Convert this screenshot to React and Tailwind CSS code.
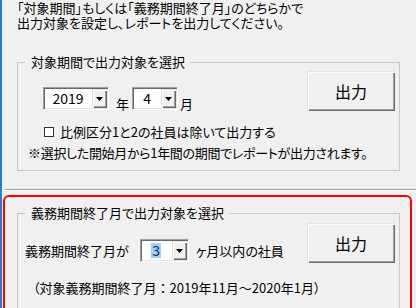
import React from "react";

function Triangle() {
  return (
    <svg width="7" height="4" viewBox="0 0 7 4">
      <path d="M0 0H7L3.5 4Z" fill="#000" />
    </svg>
  );
}

function Combo({ className, value, selected }) {
  return (
    <div
      className={`flex h-[23px] shrink-0 border border-t-[#a0a0a0] border-l-[#a0a0a0] border-r-white border-b-white bg-white shadow-[inset_1px_1px_0_#696969,inset_-1px_-1px_0_#e3e3e3] ${className}`}
    >
      <div className="flex flex-1 items-center justify-center text-[14px]">
        {selected ? (
          <span className="bg-[#a3d0f5] px-[1px] leading-[15px] text-[#0b2a55]">{value}</span>
        ) : (
          <span className="leading-[15px]">{value}</span>
        )}
      </div>
      <div className="my-[1px] mr-[1px] flex w-[15px] items-center justify-center bg-[#f0f0f0] shadow-[inset_1px_1px_0_#e3e3e3,inset_2px_2px_0_#ffffff,inset_-1px_-1px_0_#696969,inset_-2px_-2px_0_#a0a0a0]">
        <Triangle />
      </div>
    </div>
  );
}

function OutButton({ className }) {
  return (
    <div
      className={`flex h-[40px] w-[88px] shrink-0 items-center justify-center bg-[#f0f0f0] text-[16px] leading-[20px] shadow-[inset_1px_1px_0_#e3e3e3,inset_2px_2px_0_#ffffff,inset_-1px_-1px_0_#696969,inset_-2px_-2px_0_#a0a0a0] ${className}`}
    >
      出力
    </div>
  );
}

export default function App() {
  return (
    <div className="flex h-[308px] w-[416px] flex-col overflow-hidden border-l-2 border-[#1c7ed6] bg-[#f0f0f0] text-[13px] leading-[15px] text-black font-['Noto_Sans_CJK_JP',sans-serif] [font-feature-settings:'palt']">
      <div className="shrink-0 pl-[15px]">
        <p>「対象期間」もしくは「義務期間終了月」のどちらかで</p>
        <p>出力対象を設定し、レポートを出力してください。</p>
        <div className="relative mt-[32px] h-[109px] w-[383px] border border-[#c9c9c9]">
          <span className="absolute left-[7px] top-[-9px] bg-[#f0f0f0] pl-[6px] pr-[5px]">
            対象期間で出力対象を選択
          </span>
          <div className="flex items-start">
            <div className="ml-[25px] mt-[24px] flex items-end">
              <Combo className="w-[66px]" value="2019" />
              <span className="mb-[-1px] ml-[7px]">年</span>
              <Combo className="ml-[3px] w-[46px]" value="4" />
              <span className="mb-[-1px] ml-[2px]">月</span>
            </div>
            <OutButton className="ml-auto mr-[4px] mt-[8px]" />
          </div>
          <div className="ml-[26px] mt-[13px] flex items-center gap-[6px]">
            <span className="h-[10px] w-[10px] border border-[#333333] bg-white" />
            <span>比例区分1と2の社員は除いて出力する</span>
          </div>
          <p className="ml-[10px] mt-[6px] tracking-[-0.3px]">
            ※選択した開始月から1年間の期間でレポートが出力されます。
          </p>
        </div>
      </div>

      <div className="ml-[3px] mt-[18px] h-[2px] shrink-0 border-t border-b border-t-[#a0a0a0] border-b-white" />

      <div className="ml-[1px] mt-[4px] h-[140px] w-[409px] shrink-0 rounded-[6px] border-2 border-[#ff0000]">
        <div className="relative ml-[12px] mt-[16px] h-[120px] w-[383px] border border-[#c9c9c9]">
          <span className="absolute left-[7px] top-[-9px] bg-[#f0f0f0] pl-[6px] pr-[5px]">
            義務期間終了月で出力対象を選択
          </span>
          <div className="flex items-start">
            <div className="ml-[7px] mt-[25px] flex items-center">
              <span>義務期間終了月が</span>
              <Combo className="ml-[11px] w-[49px]" value="3" selected />
              <span className="ml-[7px]">ヶ月以内の社員</span>
            </div>
            <OutButton className="ml-auto mr-[4px] mt-[9px]" />
          </div>
          <p className="ml-[15px] mt-[17px]">
            （対象義務期間終了月<span className="[font-feature-settings:normal]">：</span>2019年11月
            <span className="[font-feature-settings:normal]">～</span>2020年1月）
          </p>
        </div>
      </div>
    </div>
  );
}
